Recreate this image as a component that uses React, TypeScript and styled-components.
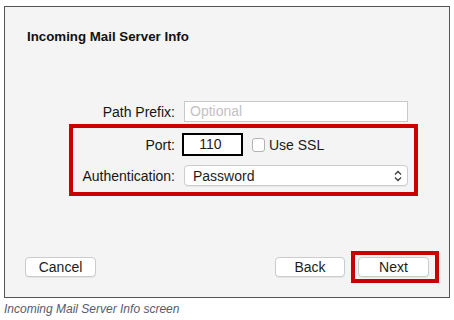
import styled, { createGlobalStyle } from "styled-components";

const GlobalStyle = createGlobalStyle`
  body {
    margin: 0;
    background: #ffffff;
    font-family: "Liberation Sans", Helvetica, Arial, sans-serif;
    color: #1c1c1c;
  }
`;

const Page = styled.div`
  padding: 6px 0 0 4px;
`;

const Window = styled.div`
  box-sizing: border-box;
  width: 446px;
  height: 292px;
  border: 1px solid #555555;
  background: #f4f4f4;
  display: flex;
  flex-direction: column;
`;

const Title = styled.div`
  padding: 22px 0 0 22px;
  font-size: 13.3px;
  line-height: 16px;
  font-weight: 700;
  color: #111;
`;

const FormArea = styled.div`
  margin-top: 56px;
  padding: 0 41px 0 68px;
  display: flex;
  flex-direction: column;
`;

const Row = styled.div<{ $h: number; $gap?: number }>`
  display: grid;
  grid-template-columns: 102px 1fr;
  column-gap: 9px;
  align-items: center;
  height: ${(p) => p.$h}px;
  margin-top: ${(p) => p.$gap ?? 0}px;
`;

const Label = styled.div`
  text-align: right;
  font-size: 14px;
  color: #161616;
  white-space: nowrap;
`;

const TextBox = styled.div`
  box-sizing: border-box;
  height: 21px;
  background: #fff;
  border: 1px solid #c9c9c9;
  padding-left: 5px;
  font-size: 14px;
  line-height: 19px;
  color: #c2c2c2;
`;

const Highlight = styled.div`
  border: 4px solid #cc0000;
  margin: 2px -10px 0 -4px;
  padding: 5px 6px 6px 0;
`;

const Controls = styled.div`
  display: flex;
  align-items: center;
`;

const PortBox = styled.div`
  box-sizing: border-box;
  width: 61px;
  height: 23px;
  margin-left: -2px;
  background: #fff;
  border: 2px solid #000;
  font-size: 14px;
  line-height: 19px;
  text-align: center;
  padding-right: 4px;
`;

const Check = styled.div`
  box-sizing: border-box;
  width: 13px;
  height: 14px;
  margin-left: 9px;
  background: #fff;
  border: 1px solid #b3b3b3;
  border-radius: 3px;
`;

const CheckLabel = styled.span`
  margin-left: 4px;
  font-size: 14px;
`;

const Select = styled.div`
  box-sizing: border-box;
  height: 21px;
  background: #fff;
  border: 1px solid #cdcdcd;
  border-radius: 4px;
  display: flex;
  align-items: center;
  justify-content: space-between;
  padding: 0 5px 0 8px;
  font-size: 14px;
  box-shadow: 0 1px 0 rgba(0, 0, 0, 0.05);
`;

const Footer = styled.div`
  margin-top: auto;
  padding: 0 10px 14px 20px;
  display: flex;
  align-items: center;
`;

const Button = styled.div<{ $w: number }>`
  box-sizing: border-box;
  width: ${(p) => p.$w}px;
  height: 20px;
  background: #fff;
  border: 1px solid #cbcbcb;
  border-radius: 4px;
  box-shadow: 0 1px 0 rgba(0, 0, 0, 0.06);
  font-size: 14px;
  line-height: 18px;
  text-align: center;
  color: #1c1c1c;
`;

const Spacer = styled.div`
  flex: 1;
`;

const NextFrame = styled.div`
  margin-left: 6px;
  border: 4px solid #cc0000;
  padding: 2px 6px 2px 3px;
`;

const Caption = styled.div`
  margin-top: 4px;
  font-size: 12px;
  line-height: 14px;
  font-style: italic;
  color: #555b6b;
`;

const Chevrons = () => (
  <svg width="8" height="12" viewBox="0 0 8 12">
    <path d="M1 4.5 L4 1.5 L7 4.5" fill="none" stroke="#3a3a3a" strokeWidth="1.3" />
    <path d="M1 7.5 L4 10.5 L7 7.5" fill="none" stroke="#3a3a3a" strokeWidth="1.3" />
  </svg>
);

export default function App() {
  return (
    <>
      <GlobalStyle />
      <Page>
        <Window>
          <Title>Incoming Mail Server Info</Title>
          <FormArea>
            <Row $h={21}>
              <Label>Path Prefix:</Label>
              <TextBox>Optional</TextBox>
            </Row>
            <Highlight>
              <Row $h={23}>
                <Label>Port:</Label>
                <Controls>
                  <PortBox>110</PortBox>
                  <Check />
                  <CheckLabel>Use SSL</CheckLabel>
                </Controls>
              </Row>
              <Row $h={21} $gap={9}>
                <Label>Authentication:</Label>
                <Select>
                  <span>Password</span>
                  <Chevrons />
                </Select>
              </Row>
            </Highlight>
          </FormArea>
          <Footer>
            <Button $w={71}>Cancel</Button>
            <Spacer />
            <Button $w={70}>Back</Button>
            <NextFrame>
              <Button $w={71}>Next</Button>
            </NextFrame>
          </Footer>
        </Window>
        <Caption>Incoming Mail Server Info screen</Caption>
      </Page>
    </>
  );
}
